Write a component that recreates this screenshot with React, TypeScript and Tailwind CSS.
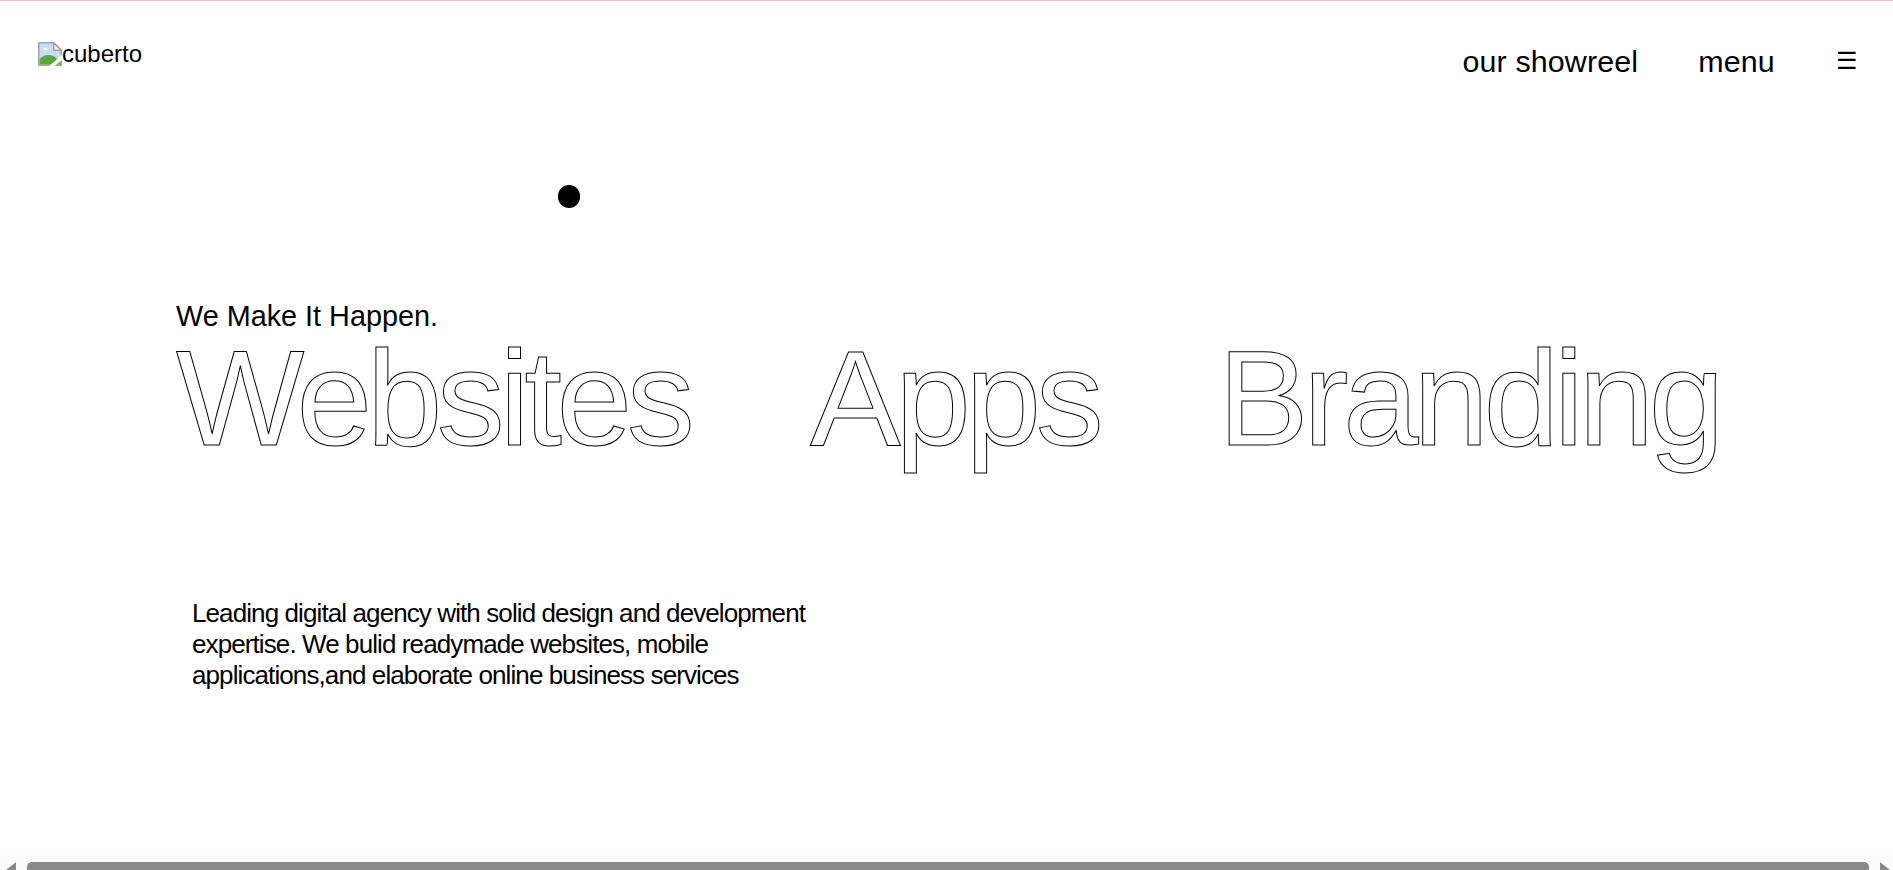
const outlined = "[-webkit-text-stroke:1px_#000] text-white"

const BrokenImage = () => (
  <svg width="24" height="24" viewBox="0 0 16 16" className="shrink-0">
    <path d="M.5 .5h10L15.500 5.500v10H.5z" fill="#c9dcf7" stroke="#a3a3a3" />
    <path d="M10.500 .5v5h5z" fill="#f4f4f4" stroke="#a3a3a3" />
    <path d="M3 5c.5-1.500 3-1.500 3.500 0z" fill="#fff" />
    <path d="M1 15v-3.500C3.500 8.500 7 7.800 10.500 9.500l2 1.500L15 13v2z" fill="#5aa83a" />
    <path d="M7.500 16 16 8.500v3.500L11 16z" fill="#fff" />
  </svg>
)

const App = () => {
  return (
    <div className="relative h-screen w-full overflow-hidden bg-white text-black flex flex-col font-['Liberation_Sans',Arial,sans-serif]">
      <div className="h-px bg-[#e3c5d2]" />

      <header className="flex items-start justify-between pl-[38px] pr-[35px] pt-[41px]">
        <div className="flex items-end text-[24px] leading-[24px]">
          <BrokenImage />
          <span>cuberto</span>
        </div>
        <nav className="flex items-center text-[30.4px] leading-[44px] tracking-[0.15px] mt-[-3px]">
          <a className="mr-[60px]">our showreel</a>
          <a className="mr-[61px]">menu</a>
          <span className="text-[24px]">☰</span>
        </nav>
      </header>

      <main className="flex-1 pl-[176px] pt-[216px]">
        <p className="text-[28.8px] leading-[34px]">We Make It Happen.</p>
        <div className={`flex text-[136px] leading-[130px] tracking-[-5.44px] ${outlined}`}>
          <span className="w-[634px]">Websites</span>
          <span className="w-[408px]">Apps</span>
          <span>Branding</span>
        </div>
        <p className="ml-[16px] mt-[135px] w-[640px] text-[26px] leading-[31px] tracking-[-0.9px]">
          Leading digital agency with solid design and development expertise. We bulid readymade websites, mobile applications,and elaborate online business services
        </p>
      </main>

      <div className="absolute left-[558px] top-[185px] w-[22px] h-[23px] rounded-full bg-black" />

      <div className="h-[15px] flex items-end bg-[#fbfbfb] pt-[7px]">
        <div className="w-0 h-0 ml-[6px] border-l-[10px] border-l-transparent border-b-[8px] border-b-[#8a8a8a]" />
        <div className="ml-[11px] mr-[11px] flex-1 h-[8px] rounded-t-[5px] bg-[#8a8a8a]" />
        <div className="w-0 h-0 mr-[3px] border-r-[10px] border-r-transparent border-b-[8px] border-b-[#8a8a8a]" />
      </div>
    </div>
  )
}

export default App
